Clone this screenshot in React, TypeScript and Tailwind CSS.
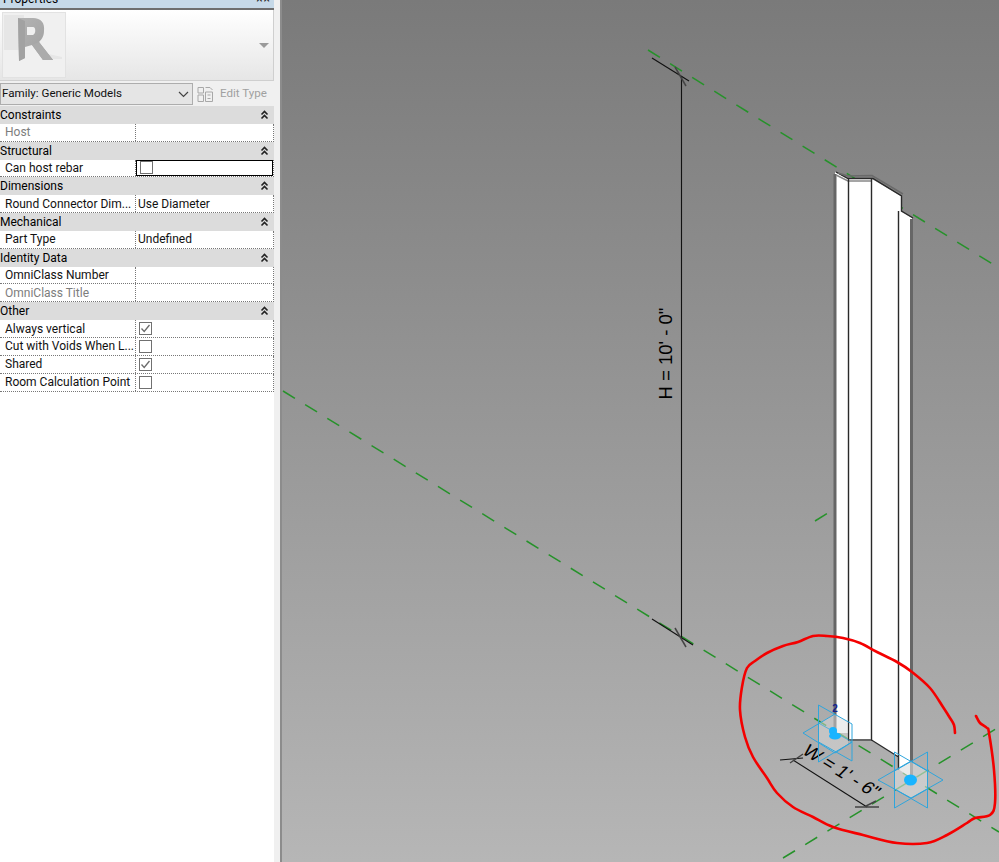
import React from "react";

type Row =
  | { kind: "head"; label: string }
  | { kind: "row"; label: string; value?: string; muted?: boolean; check?: boolean; active?: boolean };

const rows: Row[] = [
  { kind: "head", label: "Constraints" },
  { kind: "row", label: "Host", muted: true },
  { kind: "head", label: "Structural" },
  { kind: "row", label: "Can host rebar", check: false, active: true },
  { kind: "head", label: "Dimensions" },
  { kind: "row", label: "Round Connector Dim...", value: "Use Diameter" },
  { kind: "head", label: "Mechanical" },
  { kind: "row", label: "Part Type", value: "Undefined" },
  { kind: "head", label: "Identity Data" },
  { kind: "row", label: "OmniClass Number" },
  { kind: "row", label: "OmniClass Title", muted: true },
  { kind: "head", label: "Other" },
  { kind: "row", label: "Always vertical", check: true },
  { kind: "row", label: "Cut with Voids When L...", check: false },
  { kind: "row", label: "Shared", check: true },
  { kind: "row", label: "Room Calculation Point", check: false },
];

function Check({ on }: { on: boolean }) {
  return (
    <span className="ml-[1px] w-[13px] h-[13px] border border-[#707070] bg-white flex items-center justify-center shrink-0">
      {on && (
        <svg width="11" height="11" viewBox="0 0 11 11">
          <path d="M1.5 5.5 L4.2 8.5 L9.5 2" fill="none" stroke="#6a6a6a" strokeWidth="1.3" />
        </svg>
      )}
    </span>
  );
}

function Chevrons() {
  return (
    <svg width="9" height="10" viewBox="0 0 9 10">
      <path d="M1.5 4.5 L4.5 1.5 L7.5 4.5 M1.5 8.5 L4.5 5.5 L7.5 8.5" fill="none" stroke="#222" strokeWidth="1.6" />
    </svg>
  );
}

function PropRow({ row }: { row: Row }) {
  if (row.kind === "head") {
    return (
      <div className="h-[17.85px] bg-[#dcdcdc] flex items-center justify-between pr-[5px] text-black">
        <span>{row.label}</span>
        <Chevrons />
      </div>
    );
  }
  return (
    <div className="h-[17.85px] bg-white flex border-b border-dotted border-[#777] border-r">
      <div
        className={`w-[136px] shrink-0 pl-[5px] flex items-center whitespace-nowrap overflow-hidden border-r border-dotted border-[#777] ${
          row.muted ? "text-[#7d7d7d]" : "text-[#111]"
        }`}
      >
        {row.label}
      </div>
      <div
        className={`flex-1 flex items-center pl-[2px] ${
          row.active ? "border-[1.5px] border-black" : ""
        }`}
      >
        {row.check !== undefined ? <Check on={row.check} /> : <span className="text-[#111]">{row.value}</span>}
      </div>
    </div>
  );
}

function smooth(p: number[][]) {
  let d = `M${p[0][0]} ${p[0][1]}`;
  for (let i = 0; i < p.length - 1; i++) {
    const a = p[Math.max(i - 1, 0)];
    const b = p[i];
    const c = p[i + 1];
    const e = p[Math.min(i + 2, p.length - 1)];
    d += ` C${b[0] + (c[0] - a[0]) / 6} ${b[1] + (c[1] - a[1]) / 6} ${c[0] - (e[0] - b[0]) / 6} ${c[1] - (e[1] - b[1]) / 6} ${c[0]} ${c[1]}`;
  }
  return d;
}

const redPts = [
  [955, 733], [954, 725], [950, 718], [943, 707], [930, 688], [912, 672], [897, 662], [877, 652], [860, 643],
  [843, 638], [827, 636], [813, 636], [798, 642], [783, 646], [767, 653], [755, 661], [747, 668], [742, 687],
  [740, 710], [745, 737], [753, 757], [767, 778], [777, 793], [793, 807], [813, 817], [833, 827], [863, 835],
  [897, 843], [927, 843], [947, 835], [967, 823], [975, 818], [990, 815], [995, 803], [994, 770], [989, 733],
  [987, 728], [980, 723], [976, 716],
];

function Canvas() {
  const blue = "#2fa5dc";
  const green = "#26922a";
  return (
    <svg className="block w-full h-full" viewBox="282 0 717 862">
      {/* reference planes */}
      <g stroke={green} strokeWidth="1.5" strokeDasharray="14 12" fill="none">
        <path d="M648 50 L999 268" />
        <path d="M283 391 L999 832" />
        <path d="M783 858 L999 727" />
        <path d="M815 521 L836 508" />
      </g>

      {/* column */}
      <path d="M835 172 L848 179 L872 179 L901 196 L901 211 L912 218 L912 778 L898 769 L898 757 L871 740 L848 740 L848 733 L835 733 Z" fill="#fff" />
      <g fill="none" stroke="#666" strokeWidth="3">
        <path d="M835 733 L835 174" />
        <path d="M911.5 780 L911.5 219" />
      </g>
      <path d="M836 175 L848 181 L872 181" fill="none" stroke="#888" strokeWidth="1.5" />
      <g fill="none" stroke="#2a2a2a" strokeWidth="1.4">
        <path d="M836 172 L848 178.5 L873 178.5 L901.5 196 L901.5 211 L913 218" />
        <path d="M848.5 179 L848.5 740 L871.5 740 L871.5 179" />
        <path d="M871.5 740 L898.5 757 M898.5 211 L898.5 770" />
      </g>
      <path d="M838 173 L848 176 L872 175.5 L903 194" fill="none" stroke="#6a6a6a" strokeWidth="1.5" />
      <path d="M849 740 L871 740" stroke="#666" strokeWidth="2" />

      {/* H dimension */}
      <g fill="none" stroke="#111" strokeWidth="1.1">
        <path d="M652 58 L689 81" />
        <path d="M652 619 L693 645" />
        <path d="M681.5 76 L681.5 640" />
      </g>
      <g fill="none" stroke="#444" strokeWidth="1.5">
        <path d="M675 67 L686 86" />
        <path d="M675 628 L686 647" />
      </g>
      <text
        x="0"
        y="0"
        transform="translate(671.5 353.5) rotate(-90)"
        textAnchor="middle"
        fontFamily="'Liberation Sans', sans-serif"
        fontSize="18.5"
        fill="#000"
      >
        H = 10' - 0"
      </text>

      {/* W dimension */}
      <g fill="none" stroke="#111" strokeWidth="1.1">
        <path d="M793 760 L867 807" />
        <path d="M780 760 L803 758" />
      </g>
      <path d="M855 807 L879 807 M866 806 L876 801 M790 763 L803 754" fill="none" stroke="#444" strokeWidth="1.4" />
      <text
        transform="translate(801 753) rotate(32) skewX(-12)"
        fontFamily="'Liberation Sans', sans-serif"
        fontSize="18.5"
        fill="#000"
      >
        W = 1' - 6"
      </text>

      {/* marker 1 */}
      <path d="M818.5 723 L835 714 L848 722 L848 745 L835 753 L818.5 743 Z" fill="#dcdcdc" fillOpacity="0.5" />
      <g fill="none" stroke={blue} strokeWidth="1">
        <path d="M818.5 705 L852 724 L852 761 L818.5 742 Z" />
        <path d="M818.5 723 L818.5 762 L852 742" />
        <path d="M803 733 L835 714 M803 733 L835 753 L852 742" />
        <path d="M818.5 723 L852 742" strokeOpacity="0.7" />
      </g>
      <circle cx="833" cy="731" r="4" fill="#19b4ff" />
      <ellipse cx="835" cy="736" rx="6" ry="3.5" fill="#19b4ff" />
      <text x="835" y="712" textAnchor="middle" fontFamily="'Liberation Sans', sans-serif" fontWeight="700" fontSize="10" fill="#12208c">
        2
      </text>

      {/* marker 2 */}
      <path d="M894.5 771 L911 761 L927.5 771 L927.5 789 L911 798 L894.5 789 Z" fill="#dedede" fillOpacity="0.6" />
      <g fill="none" stroke={blue} strokeWidth="1">
        <path d="M894.5 752 L927.5 771 L927.5 808 L894.5 789 Z" />
        <path d="M927.5 752 L894.5 771 L894.5 808 L927.5 789 Z" />
        <path d="M878 780 L911 761 L943 780 L911 798 Z" />
      </g>
      <ellipse cx="910.5" cy="780" rx="6.5" ry="5.5" fill="#19b4ff" />

      {/* red markup */}
      <path d={smooth(redPts)} fill="none" stroke="#f40000" strokeWidth="2.6" strokeLinecap="round" strokeLinejoin="round" />
    </svg>
  );
}

export default function App() {
  return (
    <div className="w-[999px] h-[862px] flex overflow-hidden bg-[#f0f0f0] text-[12px] leading-none font-['Roboto',sans-serif]">
      <aside className="w-[280px] shrink-0 flex flex-col pr-[6px] bg-[#f0f0f0]">
        <div className="h-[8px] bg-[#c6d9e8] overflow-hidden flex justify-between px-[3px] items-start shrink-0">
          <span className="text-black whitespace-nowrap leading-[12px] -mt-[7px]">Properties</span>
          <span className="text-[#222] mr-[2px] tracking-[-1px] leading-[12px] -mt-[7px]">× ×</span>
        </div>
        <div className="h-[2px] bg-[#6e6e6e] shrink-0" />
        <div className="h-[71px] shrink-0 bg-gradient-to-b from-white to-[#e6e6e6] border-r border-b border-[#cfcfcf] flex items-center justify-between pl-[2px] pr-[2px]">
          <div className="w-[64px] h-[66px] bg-[#f0f0f0] border border-[#e2e2e2]">
            <svg width="62" height="64" viewBox="3 14 62 64">
              <defs>
                <linearGradient id="rg" x1="0" y1="0" x2="1" y2="1">
                  <stop offset="0" stopColor="#b4b4b4" />
                  <stop offset="1" stopColor="#9c9c9c" />
                </linearGradient>
              </defs>
              <path d="M4 16 L24 16 L24 51 L4 51 Z" fill="#e6e6e6" />
              <path d="M44 54 L62 58 L62 60 L44 60 Z" fill="#e6e6e6" />
              <path
                fillRule="evenodd"
                d="M18 19 L33 19 C41 19 45 24 44 32 C44 38 41 41 39 43 L53 61 L43 61 L32 46 L25 48 L25 59 L19 62 Z M27 28 L27 36 L33 36 C36 35 36 28 33 28 Z"
                fill="url(#rg)"
              />
              <path d="M32 46 L39 43 L53 61 L43 61 Z" fill="#ababab" />
              <path d="M18 19 L25 22 L25 59 L19 62 Z" fill="#a2a2a2" />
            </svg>
          </div>
          <span className="w-0 h-0 border-x-[5px] border-x-transparent border-t-[5px] border-t-[#9a9a9a] mr-[2px]" />
        </div>
        <div className="h-[25px] flex shrink-0 items-stretch pt-[2px] pb-[1px] text-[11.6px]">
          <div className="w-[193px] bg-[#e5e5e5] border border-[#adadad] flex items-center justify-between pl-[1px] pr-[3px] text-[#111] shrink-0">
            <span>Family: Generic Models</span>
            <svg width="11" height="7" viewBox="0 0 11 7">
              <path d="M1 1 L5.5 5.5 L10 1" fill="none" stroke="#444" strokeWidth="1.2" />
            </svg>
          </div>
          <div className="flex-1 flex items-center pl-[4px] gap-[6px] text-[#a0a0a0]">
            <svg width="17" height="17" viewBox="0 0 17 17">
              <path
                d="M1 1.5 H6.5 V7 H1 Z M1 9 H6.5 V15.5 H1 Z M8.5 6 H15.5 V15.5 H8.5 Z M8.5 1.5 H13 M13 1.5 L15.5 4 M10.5 9 H13.5 M10.5 12.5 H13.5"
                fill="none"
                stroke="#a8a8a8"
                strokeWidth="1"
              />
            </svg>
            <span>Edit Type</span>
          </div>
        </div>
        <div className="bg-white flex flex-col">
          {rows.map((r) => (
            <PropRow key={r.label} row={r} />
          ))}
        </div>
        <div className="flex-1 bg-white" />
      </aside>
      <div className="w-[2px] shrink-0 bg-[#8c8c8c]" />
      <main className="flex-1 bg-gradient-to-b from-[#7a7a7a] to-[#b6b6b6]">
        <Canvas />
      </main>
    </div>
  );
}
